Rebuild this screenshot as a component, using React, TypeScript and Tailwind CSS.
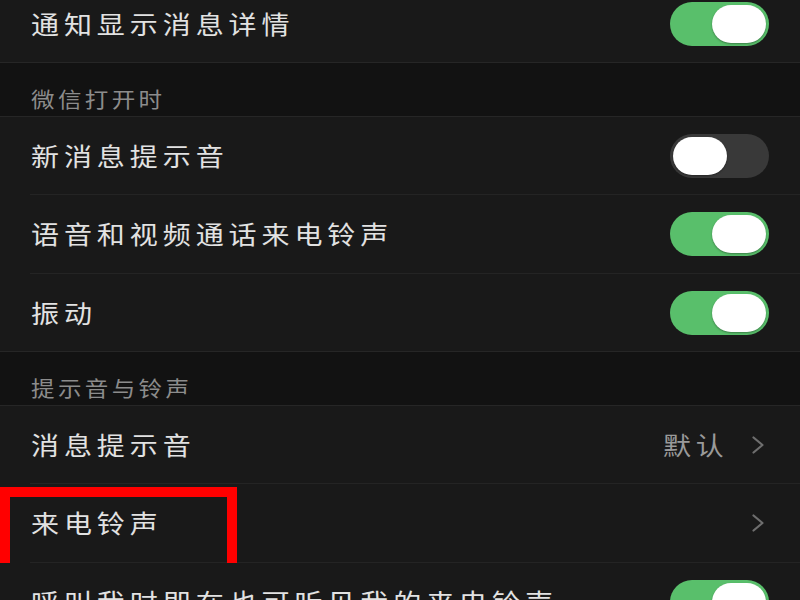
const FONT = '"Noto Sans CJK SC", "Noto Sans", sans-serif'

function Toggle({ on }: { on: boolean }) {
  return (
    <div
      className={
        on
          ? 'flex h-[44px] w-[99px] items-center justify-end rounded-full bg-[#59bf6b] px-[3px]'
          : 'flex h-[44px] w-[99px] items-center justify-start rounded-full bg-[#393939] px-[3px]'
      }
    >
      <div className="h-[38px] w-[54px] rounded-full bg-white shadow-[0_1px_2px_rgba(0,0,0,0.35)]" />
    </div>
  )
}

function Chevron() {
  return (
    <svg width="14" height="18" viewBox="0 0 14 18" fill="none" className="ml-[22px]">
      <path d="M2.5 1.5 L11.5 9 L2.5 16.5" stroke="#6e6e6e" strokeWidth="2.2" strokeLinecap="round" strokeLinejoin="round" />
    </svg>
  )
}

function Row({
  label,
  h = 'h-[78px]',
  right,
  indent = true,
  children,
}: {
  label: string
  h?: string
  right?: React.ReactNode
  indent?: boolean
  children?: React.ReactNode
}) {
  return (
    <div className={`relative flex ${h} shrink-0 flex-col bg-[#191919]`}>
      <div className="flex flex-1 items-center justify-between pl-[31px]">
        <span className="inline-block origin-left scale-x-[1.12] whitespace-nowrap text-[25px] tracking-[4.4px] text-[#e2e2e2]">
          {label}
        </span>
        {right}
      </div>
      <div className={indent ? 'ml-[30px] h-px bg-[#242424]' : 'h-px bg-[#262626]'} />
      {children}
    </div>
  )
}

function SectionHeader({ title }: { title: string }) {
  return (
    <div className="flex h-[54px] shrink-0 flex-col bg-[#121212]">
      <div className="flex flex-1 items-end pb-[3px] pl-[31px]">
        <span className="inline-block origin-left scale-x-[1.12] text-[21px] leading-[30px] tracking-[3px] text-[#8c8c8c]">
          {title}
        </span>
      </div>
      <div className="h-px bg-[#262626]" />
    </div>
  )
}

export default function App() {
  return (
    <div className="h-[600px] w-[800px] overflow-hidden bg-[#191919]" style={{ fontFamily: FONT }}>
      <div className="-mt-[15px] flex flex-col">
        <Row label="通知显示消息详情" indent={false} right={<div className="pr-[31px]"><Toggle on /></div>} />
        <SectionHeader title="微信打开时" />
        <Row label="新消息提示音" right={<div className="pr-[31px]"><Toggle on={false} /></div>} />
        <Row label="语音和视频通话来电铃声" h="h-[79px]" right={<div className="pr-[31px]"><Toggle on /></div>} />
        <Row label="振动" indent={false} right={<div className="pr-[31px]"><Toggle on /></div>} />
        <SectionHeader title="提示音与铃声" />
        <Row
          label="消息提示音"
          right={
            <div className="flex items-center pr-[35px]">
              <span className="inline-block origin-right scale-x-[1.12] text-[25px] tracking-[4.4px] text-[#9a9a9a]">
                默认
              </span>
              <Chevron />
            </div>
          }
        />
        <Row
          label="来电铃声"
          h="h-[79px]"
          right={
            <div className="flex items-center pr-[35px]">
              <Chevron />
            </div>
          }
        >
          <div className="absolute left-0 top-[3px] h-[89px] w-[237px] border-[10px] border-[#ff0000]" />
        </Row>
        <Row label="呼叫我时即在也可听见我的来电铃声" right={<div className="pr-[31px]"><Toggle on /></div>} />
      </div>
    </div>
  )
}
